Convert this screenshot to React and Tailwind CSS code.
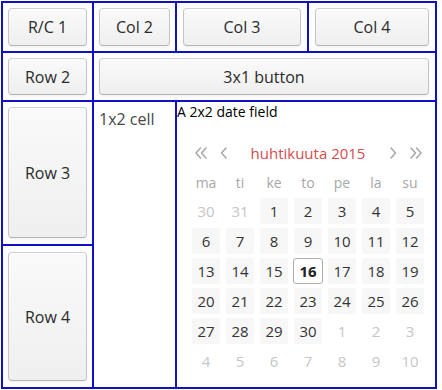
import React from 'react';

const font = { fontFamily: '"Open Sans", "Noto Sans", sans-serif' };

const Btn = ({ children }) => (
  <button className="w-full h-full rounded-[4px] border border-[#c5c5c5] border-t-[#d1d1d1] border-b-[#b3b3b3] bg-gradient-to-b from-[#fafafa] to-[#efefef] text-[16px] text-[#2a2a2a] shadow-[inset_0_1px_0_#fff,0_2px_3px_rgba(0,0,0,0.05)]">
    {children}
  </button>
);

const weeks = [
  [[30, 'o'], [31, 'o'], [1], [2], [3], [4], [5]],
  [[6], [7], [8], [9], [10], [11], [12]],
  [[13], [14], [15], [16, 't'], [17], [18], [19]],
  [[20], [21], [22], [23], [24], [25], [26]],
  [[27], [28], [29], [30], [1, 'o'], [2, 'o'], [3, 'o']],
  [[4, 'o'], [5, 'o'], [6, 'o'], [7, 'o'], [8, 'o'], [9, 'o'], [10, 'o']],
];

const Chevron = ({ dir = 'left', double = false }) => (
  <svg width="14" height="14" viewBox="0 0 14 14" fill="none" stroke="#a9a9a9" strokeWidth="1.6" strokeLinecap="round" strokeLinejoin="round">
    {dir === 'left' ? (
      double ? (
        <>
          <polyline points="6.5,2 2,7 6.5,12" />
          <polyline points="12,2 7.5,7 12,12" />
        </>
      ) : (
        <polyline points="9,2 4.5,7 9,12" />
      )
    ) : double ? (
      <>
        <polyline points="2,2 6.5,7 2,12" />
        <polyline points="7.5,2 12,7 7.5,12" />
      </>
    ) : (
      <polyline points="5,2 9.5,7 5,12" />
    )}
  </svg>
);

const DateField = () => (
  <div className="bg-white col-span-2 row-span-2 flex flex-col">
    <div className="text-[14px] leading-[19px] text-black">A 2x2 date field</div>
    {/* calendar */}
    <div className="pl-[12px] mt-[17px] w-[250px]">
      <div className="flex items-center h-[30px] w-[238px]">
        <div className="w-[24px] flex justify-center"><Chevron double /></div>
        <div className="w-[22px] flex justify-center"><Chevron /></div>
        <div className="flex-1 text-center text-[15px] text-[#d54d4d]">huhtikuuta 2015</div>
        <div className="w-[24px] flex justify-center"><Chevron dir="right" /></div>
        <div className="w-[22px] flex justify-center"><Chevron dir="right" double /></div>
      </div>
      <div className="grid grid-cols-7 w-[238px] h-[28px] items-center text-center text-[14px] text-[#a8a8a8]">
        {['ma', 'ti', 'ke', 'to', 'pe', 'la', 'su'].map((d) => (
          <div key={d}>{d}</div>
        ))}
      </div>
      {weeks.map((w, i) => (
        <div key={i} className="grid grid-cols-7 w-[238px] h-[30px]">
          {w.map(([n, k], j) => (
            <div key={j} className="flex items-center justify-center">
              <div
                className={
                  k === 'o'
                    ? 'w-[28px] h-[26px] flex items-center justify-center text-[15px] text-[#c6c6c6]'
                    : k === 't'
                    ? 'w-[30px] h-[26px] flex items-center justify-center text-[15px] font-bold text-[#222] border border-[#adadad] rounded-[3px] bg-white'
                    : 'w-[28px] h-[26px] flex items-center justify-center text-[15px] text-[#333] bg-[#f7f7f7] rounded-[2px]'
                }
              >
                {n}
              </div>
            </div>
          ))}
        </div>
      ))}
    </div>
  </div>
);

export default function App() {
  return (
    <div className="bg-white w-[442px] h-[390px] pt-[1px] pl-[1px]" style={font}>
      <div className="grid grid-cols-[89px_81px_130px_126px] grid-rows-[48px_47px_142px_141px] gap-[2px] p-[2px] bg-[#1010c8] w-[436px] h-[388px]">
        <div className="bg-white p-[5px]"><Btn>R/C 1</Btn></div>
        <div className="bg-white p-[5px]"><Btn>Col 2</Btn></div>
        <div className="bg-white p-[5px] px-[6px]"><Btn>Col 3</Btn></div>
        <div className="bg-white p-[5px] px-[6px]"><Btn>Col 4</Btn></div>

        <div className="bg-white p-[5px]"><Btn>Row 2</Btn></div>
        <div className="bg-white p-[5px] pr-[6px] col-span-3"><Btn>3x1 button</Btn></div>

        <div className="bg-white p-[5px] pb-[6px]"><Btn>Row 3</Btn></div>
        <div className="bg-white row-span-2 px-[5px] pt-[6px] text-[16px] leading-[22px] text-[#474747]">1x2 cell</div>
        <DateField />

        <div className="bg-white p-[6px] px-[5px]"><Btn>Row 4</Btn></div>
      </div>
    </div>
  );
}
